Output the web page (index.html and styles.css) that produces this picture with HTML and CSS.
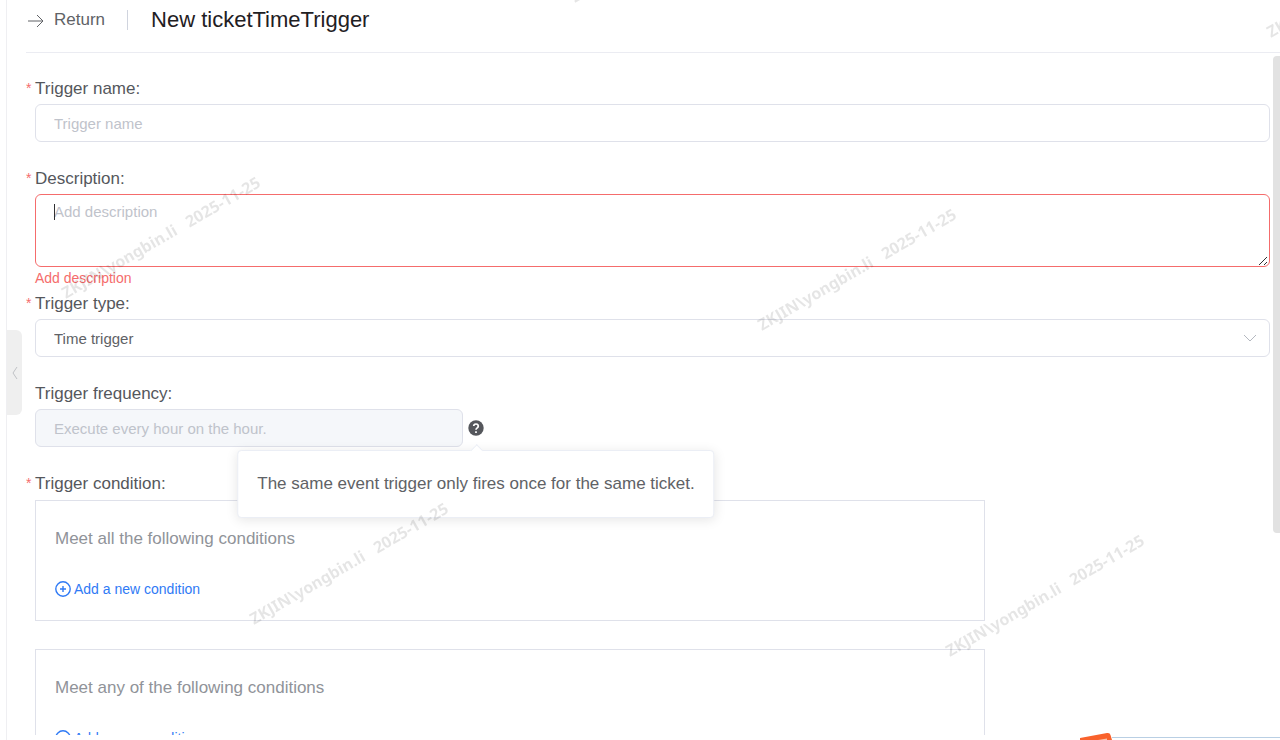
FILE: index.html
```html
<!doctype html>
<html lang="en">
  <head>
    <meta charset="utf-8" />
    <meta name="viewport" content="width=device-width, initial-scale=1.0" />
    <title>New ticketTimeTrigger</title>
    <link rel="stylesheet" href="styles.css">
  </head>
  <body>
    <div class="page">
      <header class="page-header">
        <a class="back" href="#">
          <svg class="back-icon" viewBox="0 0 16 16" width="16" height="16">
            <path d="M0 9h15M9 3l6 6-6 6" />
          </svg>
          Return
        </a>
        <h1>New ticketTimeTrigger</h1>
      </header>

      <main class="scroll-area">
        <form class="trigger-form">
          <div class="form-item">
            <label class="required" for="name">Trigger name:</label>
            <input class="control" id="name" type="text" placeholder="Trigger name" />
          </div>

          <div class="form-item is-error">
            <label class="required" for="description">Description:</label>
            <div class="textarea-wrap">
              <textarea class="control" id="description" placeholder="Add description"></textarea>
              <svg class="resizer" viewBox="0 0 10 10" width="10" height="10">
                <path d="M1 9l8-8M6 9l3-3" />
              </svg>
            </div>
            <div class="error">Add description</div>
          </div>

          <div class="form-item">
            <label class="required" for="type">Trigger type:</label>
            <div class="select-wrap">
              <select class="control" id="type">
                <option>Time trigger</option>
              </select>
              <svg class="chevron" viewBox="0 0 12 8" width="12" height="8">
                <path d="M0 1l6 6 6-6" />
              </svg>
            </div>
          </div>

          <div class="form-item">
            <label for="frequency">Trigger frequency:</label>
            <div class="frequency">
              <input class="control" id="frequency" type="text" placeholder="Execute every hour on the hour." disabled />
              <div class="help">
                <svg class="help-icon" viewBox="0 0 16 16" width="16" height="16">
                  <circle cx="8" cy="8" r="7.7" />
                  <path d="M5.7 6.1a2.3 2.1 0 1 1 3.5 1.8C8.3 8.5 8 8.8 8 9.8M8 11.2v1.7" />
                </svg>
                <div class="tooltip" role="tooltip">The same event trigger only fires once for the same ticket.</div>
              </div>
            </div>
          </div>

          <div class="form-item">
            <div class="label required">Trigger condition:</div>
            <div class="conditions">
              <section class="condition-box">
                <p>Meet all the following conditions</p>
                <button class="add" type="button">
                  <svg viewBox="0 0 16 16" width="16" height="16">
                    <circle cx="8" cy="8" r="7.2" />
                    <path d="M8 5v6M5 8h6" />
                  </svg>
                  Add a new condition
                </button>
              </section>
              <section class="condition-box">
                <p>Meet any of the following conditions</p>
                <button class="add" type="button">
                  <svg viewBox="0 0 16 16" width="16" height="16">
                    <circle cx="8" cy="8" r="7.2" />
                    <path d="M8 5v6M5 8h6" />
                  </svg>
                  Add a new condition
                </button>
              </section>
            </div>
          </div>
        </form>
        <div class="scroll-thumb"></div>
      </main>

      <button class="collapse" type="button" aria-label="Collapse">
        <svg viewBox="0 0 6 14" width="6" height="14">
          <path d="M5 1L1 7l4 6" />
        </svg>
      </button>
    </div>

    <svg class="watermark" aria-hidden="true">
      <text transform="translate(575 3) rotate(-30)">ZKJIN\yongbin.li&#160;&#160; 2025-11-25</text>
      <text transform="translate(1271 38) rotate(-30)">ZKJIN\yongbin.li&#160;&#160; 2025-11-25</text>
      <text transform="translate(66 299) rotate(-30)">ZKJIN\yongbin.li&#160;&#160; 2025-11-25</text>
      <text transform="translate(762 331) rotate(-30)">ZKJIN\yongbin.li&#160;&#160; 2025-11-25</text>
      <text transform="translate(254 625) rotate(-30)">ZKJIN\yongbin.li&#160;&#160; 2025-11-25</text>
      <text transform="translate(950 657) rotate(-30)">ZKJIN\yongbin.li&#160;&#160; 2025-11-25</text>
    </svg>

    <div class="ime-bar">
      <svg class="ime-logo" viewBox="0 0 32 8" width="32" height="8">
        <path class="ime-logo-bg" d="M0 6L27 1q3-.5 3.5 2L32 8H0z" />
        <path class="ime-logo-mark" d="M18 8l9-1.500v1.500z" />
      </svg>
    </div>
  </body>
</html>
```

FILE: styles.css
```css
:root {
  --text: #606266;
  --placeholder: #bfc3cb;
  --border: #dfe1ea;
  --danger: #f56c6c;
  --primary: #2f7af5;
}

* {
  box-sizing: border-box;
}

body {
  margin: 0;
  height: 100vh;
  overflow: hidden;
  background: #fff;
  color: var(--text);
  font-family: 'Liberation Sans', Arial, sans-serif;
  font-size: 17px;
}

svg {
  fill: none;
  stroke: currentColor;
  flex: none;
}

.page {
  position: relative;
  display: flex;
  flex-direction: column;
  height: 100vh;
  margin-left: 6px;
  padding: 0 0 5px 19px;
  border-left: 1px solid #efeff2;
}

.page-header {
  display: flex;
  align-items: center;
  height: 53px;
  padding: 0 0 12px 2px;
  border-bottom: 1px solid #ebecf2;
}

.back {
  display: flex;
  align-items: center;
  gap: 10px;
  padding-right: 22px;
  border-right: 1px solid #d0d4de;
  color: var(--text);
  text-decoration: none;
}

.page-header h1 {
  margin: 0 0 0 23px;
  color: #1f2023;
  font-size: 22px;
  line-height: 24px;
  font-weight: 400;
}

/* form */
.scroll-area {
  position: relative;
  flex: 1;
  min-height: 0;
  overflow: hidden;
}

.scroll-thumb {
  position: absolute;
  top: 3px;
  right: 0;
  width: 7px;
  height: 70%;
  border-radius: 4px 0 0 4px;
  background: #e2e2e2;
}

.trigger-form {
  padding: 21px 10px 0 9px;
}

.form-item {
  margin-bottom: 22px;
}

.form-item.is-error {
  margin-bottom: 0;
}

label,
.label {
  display: block;
  line-height: 30px;
  color: #55575c;
}

.required::before {
  content: '*';
  display: inline-block;
  width: 9px;
  margin-left: -9px;
  color: var(--danger);
  font-size: 14px;
  vertical-align: top;
  line-height: 28px;
}

.control {
  display: block;
  width: 100%;
  height: 38px;
  padding: 0 18px;
  border: 1px solid var(--border);
  border-radius: 6px;
  background: #fff;
  color: var(--text);
  font-family: inherit;
  font-size: 15px;
  outline: none;
  appearance: none;
}

.control::placeholder {
  color: var(--placeholder);
  opacity: 1;
}

.control:disabled {
  background: #f5f7fa;
}

textarea.control {
  height: 73px;
  padding: 8px 18px;
  line-height: 18px;
  resize: none;
}

.is-error .control {
  border-color: var(--danger);
}

.textarea-wrap,
.select-wrap {
  position: relative;
}

/* text cursor */
.textarea-wrap::before {
  content: '';
  position: absolute;
  top: 10px;
  left: 19px;
  width: 1px;
  height: 16px;
  background: #303133;
}

.resizer {
  position: absolute;
  right: 2px;
  bottom: 1px;
  color: #303133;
}

.chevron {
  position: absolute;
  top: 15px;
  right: 14px;
  color: #b4b8c0;
}

.error {
  height: 22px;
  color: var(--danger);
  font-size: 14px;
  line-height: 22px;
}

.frequency {
  display: flex;
  align-items: center;
  gap: 5px;
}

.frequency .control {
  width: 428px;
}

.help {
  position: relative;
}

.help-icon {
  display: block;
}

.help-icon circle {
  fill: #55575c;
  stroke: none;
}

.help-icon path {
  stroke: #fff;
  stroke-width: 1.7;
}

.tooltip {
  position: absolute;
  top: 30px;
  left: 50%;
  z-index: 1;
  padding: 0 19px;
  border: 1px solid #ebeef5;
  border-radius: 4px;
  background: #fff;
  box-shadow: 0 2px 12px rgba(0, 0, 0, 0.1);
  line-height: 66px;
  white-space: nowrap;
  transform: translateX(-50%);
}

.tooltip::before {
  content: '';
  position: absolute;
  top: -5px;
  left: 50%;
  width: 8px;
  height: 8px;
  margin-left: -4px;
  border: 1px solid #ebeef5;
  border-width: 1px 0 0 1px;
  background: #fff;
  transform: rotate(45deg);
}

.conditions {
  display: flex;
  flex-direction: column;
  gap: 28px;
  max-width: 950px;
  padding-top: 1px;
}

.condition-box {
  padding: 19px;
  border: 1px solid var(--border);
}

.condition-box p {
  margin: 0 0 19px;
  color: #909399;
  line-height: 38px;
}

.add {
  display: flex;
  align-items: center;
  gap: 3px;
  height: 24px;
  padding: 0;
  border: 0;
  background: none;
  color: var(--primary);
  font-family: inherit;
  font-size: 14px;
}

.add svg {
  stroke-width: 1.4;
}

.collapse {
  position: absolute;
  top: 330px;
  left: 0;
  display: flex;
  align-items: center;
  justify-content: center;
  width: 15px;
  height: 85px;
  padding: 0;
  border: 0;
  border-radius: 0 6px 6px 0;
  background: #efefef;
  color: #c0c2c6;
}

.watermark {
  position: fixed;
  top: 0;
  left: 0;
  z-index: 5;
  width: 100%;
  height: 100%;
  pointer-events: none;
}

.watermark text {
  fill: rgba(0, 0, 0, 0.1);
  stroke: none;
  font-family: 'Noto Sans', sans-serif;
  font-size: 16px;
  font-weight: 700;
}

/* input method bar peeking in at the bottom edge */
.ime-bar {
  position: fixed;
  right: 0;
  bottom: 0;
  z-index: 6;
  display: flex;
  width: 200px;
}

.ime-bar::after {
  content: '';
  flex: 1;
  height: 2px;
  align-self: flex-end;
  border-top: 1px solid #b9cfe4;
}

.ime-logo {
  stroke: none;
}

.ime-logo-bg {
  fill: #f9622c;
}

.ime-logo-mark {
  fill: #fbc3ac;
}
```
